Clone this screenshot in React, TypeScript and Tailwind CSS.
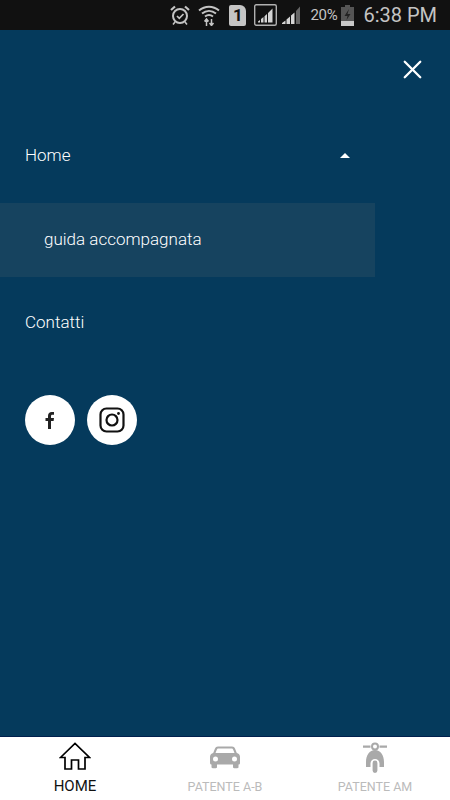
import { X } from 'lucide-react';

function StatusBar() {
  return (
    <div className="h-[30px] bg-[#111111] flex items-center justify-end pr-[13px] text-[#c4c4c4] font-['Roboto',sans-serif]">
      {/* alarm */}
      <svg width="22" height="22" viewBox="0 0 22 22" fill="none" stroke="#c4c4c4" className="mr-[7px]">
        <circle cx="11" cy="12" r="7" strokeWidth="2" />
        <path d="M8 12l2.300 2.300L14.500 10" strokeWidth="1.700" />
        <path d="M2 6l4-3.500M20 6l-4-3.500" strokeWidth="2.200" />
        <path d="M6 18l-2 2.500M16 18l2 2.500" strokeWidth="1.600" />
      </svg>
      {/* wifi */}
      <svg width="22" height="22" viewBox="0 0 22 22" fill="none" stroke="#c4c4c4" className="mr-[9px]">
        <path d="M1 6.500C7 1.500 15 1.500 21 6.500" strokeWidth="2" />
        <path d="M4 9.500c4.200-3.300 9.800-3.300 14 0" strokeWidth="2" />
        <path d="M7 12.500c2.500-1.800 5.500-1.800 8 0" strokeWidth="2" />
        <path d="M8.500 22v-6M6.500 17.500l2-2.500 2 2.500M13.500 15v6M11.500 19l2 2.500 2-2.500" strokeWidth="1.500" />
      </svg>
      {/* sim */}
      <div className="w-[17px] h-[21px] bg-[#c4c4c4] rounded-[2px] rounded-tr-[6px] mr-[8px] flex items-center justify-center text-[#111111] text-[17px] leading-none font-bold">
        1
      </div>
      {/* signal boxed */}
      <svg width="23" height="22" viewBox="0 0 23 22" fill="none" className="mr-[5px]">
        <rect x="0.700" y="0.700" width="21.600" height="20.600" rx="1.500" stroke="#b0b0b0" strokeWidth="1.400" />
        <path d="M4 18.500h2v-2.500l-2 1.500zM7 18.500h2.500v-5.500L7 15zM10.500 18.500H13V10l-2.500 2.200zM14 18.500h4.500V4.500L14 9z" fill="#d4d4d4" />
      </svg>
      {/* signal */}
      <svg width="21" height="22" viewBox="0 0 21 22" className="mr-[7px]">
        <path d="M0 20h3.500v-3.500L0 19zM4.500 20H8v-7.500l-3.500 3zM9 20h3.500V8.500L9 11.500z" fill="#d4d4d4" />
        <path d="M14 20h4V2.500l-4 4.500z" fill="#666666" />
      </svg>
      <span className="text-[15px] tracking-[-0.3px] mr-[4px]">20%</span>
      {/* battery */}
      <svg width="13" height="22" viewBox="0 0 13 22" className="mr-[9px]">
        <path d="M4 1h5v2h4v19H0V3h4z" fill="#555555" />
        <path d="M0 17h13v5H0z" fill="#c8c8c8" />
        <path d="M8 5L3.500 12h3l-1 4 4-6H6.500z" fill="#222222" />
      </svg>
      <span className="text-[20px] leading-none">6:38 PM</span>
    </div>
  );
}

function TabBar() {
  return (
    <div className="h-[64px] bg-white border-t-[1px] border-[#001f4d] grid grid-cols-3 font-['Roboto',sans-serif]">
      <div className="flex flex-col items-center pt-[5px]">
        <svg width="32" height="28" viewBox="0 0 32 28" fill="none" stroke="#000000" strokeWidth="1.700">
          <path d="M1.500 15.500L16 1.500l14.500 14h-4.500v11.500h-6.500v-9h-7v9H6V15.500z" strokeLinejoin="miter" />
        </svg>
        <span className="text-[15px] leading-none mt-[9px] text-[#111111]">HOME</span>
      </div>
      <div className="flex flex-col items-center pt-[6px]">
        <svg width="32" height="28" viewBox="0 0 32 28" fill="#a9a9a9">
          <path fillRule="evenodd" d="M9 3.500h14c1.500 0 2.500.8 3 2l1.800 4.500c1.800.6 3.200 1.800 3.200 3.800v6.200c0 1-.7 1.500-1.500 1.500v2.500c0 .8-.5 1.200-1.200 1.200h-3.100c-.8 0-1.200-.5-1.200-1.200V21.500H8v2.500c0 .8-.5 1.200-1.200 1.200H3.700c-.8 0-1.200-.5-1.200-1.200v-2.500c-.9 0-1.500-.6-1.500-1.500v-6.200c0-2 1.400-3.200 3.200-3.800L6 5.500c.5-1.200 1.500-2 3-2zM9.500 5.500c-.9 0-1.400.4-1.700 1.200L6.500 10h19l-1.300-3.300c-.3-.8-.8-1.200-1.700-1.200zM6.500 13.500a2.500 2.500 0 100 5 2.500 2.500 0 000-5zm19 0a2.500 2.500 0 100 5 2.500 2.500 0 000-5z" />
        </svg>
        <span className="text-[12.5px] leading-none mt-[10px] text-[#bbbbbb]">PATENTE A-B</span>
      </div>
      <div className="flex flex-col items-center pt-[6px]">
        <svg width="24" height="32" viewBox="0 0 24 32" fill="#a9a9a9" className="-mt-[1px] -mb-[3px]">
          <path d="M0 3.500h7.500v2.200H0zM16.500 3.500H24v2.200h-7.500z" />
          <path fillRule="evenodd" d="M12 0.500a4 4 0 110 8 4 4 0 010-8zm0 2a2 2 0 100 4 2 2 0 000-4z" />
          <path d="M12 8c-5.500 0-9 5-9 12v5h4.500v-3.500a4.500 4.500 0 019 0V25H21v-5c0-7-3.500-12-9-12z" />
          <path d="M12 18.500a2.400 2.400 0 012.400 2.400v7.700a2.400 2.400 0 01-4.800 0v-7.700A2.400 2.400 0 0112 18.500z" />
        </svg>
        <span className="text-[12.5px] leading-none mt-[10px] text-[#bbbbbb]">PATENTE AM</span>
      </div>
    </div>
  );
}

export default function App() {
  return (
    <div className="h-[800px] w-[450px] flex flex-col overflow-hidden bg-[#053a5c]">
      <StatusBar />
      <div className="flex-1 text-white font-['Roboto',sans-serif] font-light text-[17px]">
        <div className="flex justify-end pt-[29px] pr-[27px]">
          <X size={31} strokeWidth={2.300} color="#ffffff" absoluteStrokeWidth className="-m-[5px]" />
        </div>
        <div className="w-[375px] mt-[65px]">
          <div className="h-[58px] px-[25px] flex justify-between items-start">
            <span className="leading-[20px]">Home</span>
            <span className="mt-[8px] w-0 h-0 border-x-[5px] border-x-transparent border-b-[5px] border-b-white" />
          </div>
          <div className="h-[74px] bg-[#16435f] pl-[44px] flex items-center">guida accompagnata</div>
          <div className="h-[90px] pl-[25px] pt-[35px] leading-[20px]">Contatti</div>
        </div>
        <div className="flex gap-[12px] pl-[25px] mt-[28px]">
          <div className="w-[50px] h-[50px] rounded-full bg-white flex items-center justify-center">
            <svg width="12" height="18" viewBox="0 0 12 18" fill="#222222">
              <path d="M4 18V10H1.500V7H4V5c0-2.600 1.500-4 3.800-4 1.100 0 1.900.1 2.200.1v2.700H8.500c-1.200 0-1.500.6-1.500 1.400V7h3l-.4 3H7v8z" />
            </svg>
          </div>
          <div className="w-[50px] h-[50px] rounded-full bg-white flex items-center justify-center">
            <svg width="26" height="26" viewBox="0 0 26 26" fill="none" stroke="#111111" strokeWidth="2.200">
              <rect x="1.500" y="1.500" width="23" height="23" rx="6" />
              <circle cx="13" cy="13" r="5.500" />
              <circle cx="19.500" cy="6.500" r="1.400" fill="#111111" stroke="none" />
            </svg>
          </div>
        </div>
      </div>
      <TabBar />
    </div>
  );
}
